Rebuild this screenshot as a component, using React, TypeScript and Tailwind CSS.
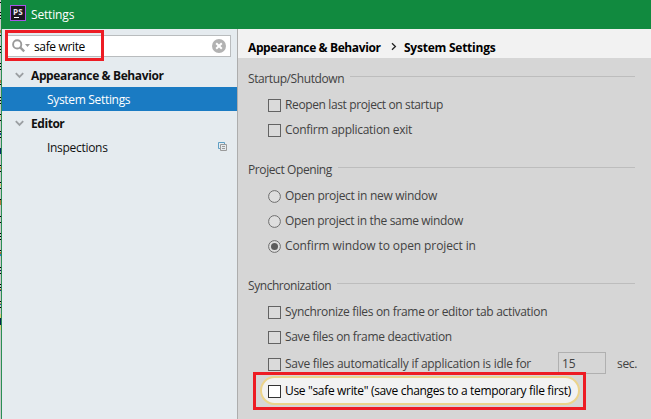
import type { ReactNode } from "react";

const edgeMarks: [number, string][] = [
  [2, "h-px bg-black"], [12, "h-px bg-black"], [15, "h-px bg-black"], [18, "h-px bg-black"],
  [30, "h-[3px] bg-[#b5763a]"], [35, "h-px bg-black"], [46, "h-px bg-black"], [49, "h-px bg-black"],
  [52, "h-px bg-black"], [63, "h-px bg-black"], [66, "h-px bg-black"], [69, "h-px bg-black"],
  [80, "h-[3px] bg-[#b5763a]"], [84, "h-px bg-black"], [97, "h-px bg-black"], [100, "h-px bg-black"],
  [103, "h-px bg-black"], [114, "h-px bg-black"], [116, "h-px bg-[#d9c46a]"], [120, "h-px bg-black"],
  [131, "h-px bg-black"], [133, "h-[2px] bg-[#1c3f8c]"], [137, "h-px bg-black"], [148, "h-[6px] bg-[#062a66]"],
  [165, "h-px bg-black"], [167, "h-[2px] bg-[#c98a3c]"], [171, "h-px bg-black"], [182, "h-px bg-black"],
  [184, "h-[2px] bg-[#d9c46a]"], [188, "h-px bg-black"], [199, "h-px bg-black"], [200, "h-[5px] bg-[#b5763a]"],
  [216, "h-px bg-black"], [222, "h-px bg-black"], [233, "h-px bg-black"], [236, "h-px bg-black"],
  [239, "h-px bg-black"], [250, "h-px bg-black"], [252, "h-[2px] bg-[#a8602c]"], [254, "h-[2px] bg-[#1f86c4]"],
  [267, "h-px bg-black"], [270, "h-px bg-[#10105c]"], [273, "h-px bg-black"], [284, "h-px bg-black"],
  [287, "h-px bg-black"], [289, "h-px bg-[#b5763a]"], [290, "h-px bg-[#10307c]"], [301, "h-px bg-black"],
  [303, "h-px bg-[#d09a4c]"], [304, "h-px bg-[#1f56a4]"], [307, "h-px bg-black"], [314, "h-[4px] bg-[#d8cf78]"],
  [318, "h-[7px] bg-[#04244c]"], [325, "h-[5px] bg-[#d8cf78]"],
];

function Section({ title, className }: { title: string; className: string }) {
  return (
    <div className="flex h-5 items-center pr-4">
      <span className={`mt-[2px] ${className}`}>{title}</span>
      <span className="-mt-[3px] ml-[6px] h-px flex-1 bg-[#bdbdbd]" />
    </div>
  );
}

function Check({ children, className, active = false }: { children: ReactNode; className: string; active?: boolean }) {
  return (
    <label className="flex h-[25px] items-center pl-5">
      <span
        className={
          active
            ? "mt-px size-[13px] shrink-0 border border-[#333] bg-white"
            : "mt-px size-[13px] shrink-0 border border-[#636363] bg-[#dadada]"
        }
      />
      <span className={`mt-px ml-1 ${className}`}>{children}</span>
    </label>
  );
}

function Radio({ children, className, on = false }: { children: ReactNode; className: string; on?: boolean }) {
  return (
    <label className="flex h-[25px] items-center pl-5">
      <svg className="mt-px size-[13px] shrink-0" viewBox="0 0 13 13">
        <circle cx="6.5" cy="6.5" r="5.9" fill="#dedede" stroke="#6e6e6e" strokeWidth="1" />
        {on && <circle cx="6.5" cy="6.5" r="3.5" fill="#5c5c5c" />}
      </svg>
      <span className={`mt-px ml-1 ${className}`}>{children}</span>
    </label>
  );
}

function Chevron() {
  return (
    <svg className="mr-[7px] ml-[13px] h-[7px] w-[9px]" viewBox="0 0 9 7" fill="none">
      <path d="M.8 1.2 4.5 5l3.7-3.8" stroke="#9b9fa2" strokeWidth="1.8" />
    </svg>
  );
}

export default function App() {
  return (
    <div className="relative flex h-[419px] w-[651px] overflow-hidden bg-[#d6d6d6] font-['Open_Sans','Noto_Sans',sans-serif] text-[12px] leading-5 whitespace-nowrap text-[#424242]">
      <div className="relative w-px shrink-0 bg-[#c9c9c9]">
        {edgeMarks.map(([y, style]) => (
          <span key={y} className={`absolute left-0 w-px ${style}`} style={{ top: y }} />
        ))}
      </div>
      <div className="w-px shrink-0 bg-[#2a8f55]" />

      <div className="flex min-w-0 flex-1 flex-col">
        <header className="-ml-px flex h-[29px] shrink-0 items-start bg-[#118a3f] pt-[5px] pl-[9px] text-white">
          <span className="flex size-4 flex-col items-start border border-[#a654e8] bg-[#1b1720] pt-[2px] pl-[2px] text-[8px] leading-[7px] font-bold text-[#efe6f2]">
            <span className="tracking-[0.2px]">PS</span>
            <span className="mt-[2px] ml-px h-px w-[5px] bg-white" />
          </span>
          <span className="ml-[5px] tracking-[-0.16px]">Settings</span>
        </header>

        <div className="flex min-h-0 flex-1">
          <aside className="flex w-[235px] shrink-0 flex-col bg-[#e5ebef] text-[#111]">
            <div className="mt-[6px] ml-[5px] flex h-[22px] w-[224px] items-center border border-[#b9bcbe] bg-white pr-1 pl-[4px] text-black">
              <svg className="h-[14px] w-5 shrink-0" viewBox="0 0 20 14" fill="none">
                <circle cx="5.2" cy="5.4" r="4.1" stroke="#9a9a9a" strokeWidth="1.9" />
                <path d="m8.2 8.4 4 4" stroke="#9a9a9a" strokeWidth="2.3" />
                <path d="M13 5h5l-2.5 3z" fill="#9a9a9a" />
              </svg>
              <span className="mt-[2px] ml-[2px] tracking-[-0.36px]">safe write</span>
              <svg className="ml-auto size-[14px]" viewBox="0 0 14 14">
                <circle cx="7" cy="7" r="7" fill="#b2b2b2" />
                <path d="m4.2 4.2 5.6 5.6m0-5.6L4.2 9.8" stroke="#fff" strokeWidth="2" />
              </svg>
            </div>
            <div className="mt-[6px] flex h-6 items-center font-bold">
              <Chevron />
              <span className="mt-[2px] tracking-[-0.38px]">Appearance &amp; Behavior</span>
            </div>
            <div className="flex h-6 items-center bg-[#1a7bc3] pt-[2px] pl-[45px] tracking-[-0.32px] text-white">System Settings</div>
            <div className="flex h-6 items-center font-bold">
              <Chevron />
              <span className="mt-[2px] tracking-[-0.45px]">Editor</span>
            </div>
            <div className="flex h-6 items-center pr-[10px] pl-[45px] tracking-[-0.3px]">
              <span className="mt-[2px]">Inspections</span>
              <svg className="-mt-px ml-auto size-[9px]" viewBox="0 0 9 9" fill="none">
                <path d="M2 6.5H.5v-6h6V2" stroke="#5f9fc4" />
                <path d="M2.5 2.5h6v6h-6zM4 4.5h3M4 6.5h3" stroke="#9a9a9a" />
              </svg>
            </div>
          </aside>
          <div className="w-px shrink-0 bg-[#adadad]" />

          <main className="flex min-w-0 flex-1 flex-col">
            <div className="flex h-[29px] shrink-0 items-center bg-[#f2f2f2] pt-[7px] pl-[10px] font-bold text-black">
              <span className="mt-px w-[133px] tracking-[-0.38px]">Appearance &amp; Behavior</span>
              <svg className="-mt-px ml-[10px] h-[9px] w-[6px]" viewBox="0 0 6 9" fill="none">
                <path d="m1 1.2 3.4 3.3L1 7.8" stroke="#222" strokeWidth="1.3" />
              </svg>
              <span className="mt-px ml-[7px] tracking-[-0.24px]">System Settings</span>
            </div>

            <div className="flex flex-col pt-[10px] pl-[10px]">
              <Section title="Startup/Shutdown" className="tracking-[-0.4px]" />
              <div className="mt-[4px]">
                <Check className="tracking-[-0.38px]">Reopen last project on startup</Check>
                <Check className="tracking-[-0.27px]">Confirm application exit</Check>
              </div>
              <div className="h-[17px]" />
              <Section title="Project Opening" className="tracking-[-0.4px]" />
              <div className="mt-[4px]">
                <Radio className="tracking-[-0.3px]">Open project in new window</Radio>
                <Radio className="tracking-[-0.33px]">Open project in the same window</Radio>
                <Radio on className="tracking-[-0.1px]">Confirm window to open project in</Radio>
              </div>
              <div className="h-[17px]" />
              <Section title="Synchronization" className="tracking-[-0.44px]" />
              <div className="mt-[4px]">
                <Check className="tracking-[-0.32px]">Synchronize files on frame or editor tab activation</Check>
                <Check className="tracking-[-0.33px]">Save files on frame deactivation</Check>
                <div className="mt-[2px] flex h-[25px] items-center">
                  <div className="w-[310px]">
                    <Check className="tracking-[-0.26px]">Save files automatically if application is idle for</Check>
                  </div>
                  <span className="-mt-px flex h-[22px] w-12 items-center border border-[#b0b0b0] pt-[2px] pl-[3px]">15</span>
                  <span className="mt-px ml-[11px] tracking-[-0.3px]">sec.</span>
                </div>
                <div className="ml-3 flex h-[29px] w-[320px] items-center rounded-full border-2 border-[#ecd48c] bg-[#f2f2f2] text-black">
                  <div className="-ml-[14px]">
                    <Check active className="tracking-[-0.33px]">Use "safe write" (save changes to a temporary file first)</Check>
                  </div>
                </div>
              </div>
            </div>
          </main>
        </div>
      </div>

      <div className="absolute top-[30px] left-[5px] h-[31px] w-[99px] border-[3px] border-[#ed1c24]" />
      <div className="absolute top-[372px] left-[253px] h-[38px] w-[333px] border-[3px] border-[#ed1c24]" />
    </div>
  );
}
